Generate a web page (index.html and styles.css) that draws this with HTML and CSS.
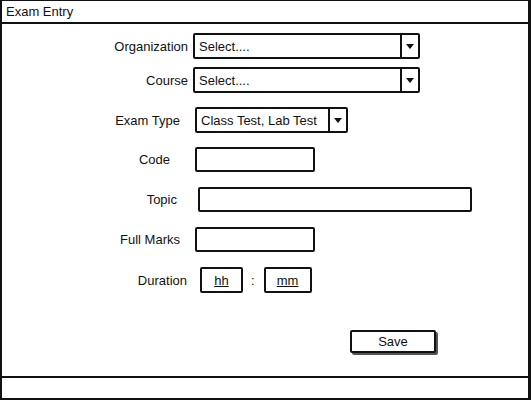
FILE: index.html
```html
<!DOCTYPE html>
<html>
<head>
<meta charset="utf-8">
<link rel="stylesheet" href="styles.css">
</head>
<body>
<div class="window">
  <div class="titlebar">Exam Entry</div>
  <div class="content">
    <div class="row r-org">
      <span class="label">Organization</span>
      <div class="select wide"><span class="sel-text">Select....</span><span class="arrow"></span></div>
    </div>
    <div class="row r-course">
      <span class="label">Course</span>
      <div class="select wide"><span class="sel-text">Select....</span><span class="arrow"></span></div>
    </div>
    <div class="row r-type">
      <span class="label">Exam Type</span>
      <div class="select narrow"><span class="sel-text">Class Test, Lab Test</span><span class="arrow"></span></div>
    </div>
    <div class="row r-code">
      <span class="label">Code</span>
      <div class="input short"></div>
    </div>
    <div class="row r-topic">
      <span class="label">Topic</span>
      <div class="input long"></div>
    </div>
    <div class="row r-marks">
      <span class="label">Full Marks</span>
      <div class="input short"></div>
    </div>
    <div class="row r-dur">
      <span class="label">Duration</span>
      <div class="input time hh"><u>hh</u></div>
      <span class="colon">:</span>
      <div class="input time mm"><u>mm</u></div>
    </div>
    <div class="row r-save">
      <div class="button">Save</div>
    </div>
  </div>
  <div class="statusbar"></div>
</div>
</body>
</html>
```

FILE: styles.css
```css
html, body {
  margin: 0;
  padding: 0;
  background: #fff;
}
body {
  font-family: "Liberation Sans", Arial, sans-serif;
  font-size: 13px;
  color: #111;
}
.window {
  width: 531px;
  height: 400px;
  box-sizing: border-box;
  border: 2px solid #111;
  border-top-width: 1px;
  border-right-width: 3px;
  border-bottom-width: 2px;
  display: flex;
  flex-direction: column;
}
.titlebar {
  height: 21px;
  line-height: 21px;
  padding-left: 4px;
  border-bottom: 2px solid #111;
}
.content {
  flex: 1;
  display: flex;
  flex-direction: column;
}
.statusbar {
  height: 20px;
  border-top: 2px solid #111;
}
.row {
  display: flex;
  align-items: center;
}
.label {
  display: block;
  text-align: right;
  flex: none;
}
.select, .input, .button {
  box-sizing: border-box;
  border: 2px solid #111;
  border-radius: 2px;
  background: #fff;
}
.select {
  display: flex;
  align-items: center;
  height: 26px;
}
.sel-text {
  flex: 1;
  padding-left: 4px;
  white-space: nowrap;
  overflow: hidden;
}
.arrow {
  align-self: stretch;
  width: 16px;
  border-left: 2px solid #111;
  display: flex;
  align-items: center;
  justify-content: center;
}
.arrow::after {
  content: "";
  width: 0;
  height: 0;
  border-left: 4px solid transparent;
  border-right: 4px solid transparent;
  border-top: 5px solid #111;
}
.select.wide { width: 227px; }
.select.narrow { width: 153px; }
.select.narrow .arrow { width: 16px; }
.input { height: 25px; }
.input.short { width: 120px; }
.input.long { width: 274px; }
.input.time {
  display: flex;
  align-items: center;
  justify-content: center;
  height: 26px;
}
.input.hh { width: 43px; }
.input.mm { width: 48px; }
.colon {
  margin-left: 8px;
  margin-right: 9px;
}

/* per-row placement */
.r-org { margin-top: 9px; }
.r-org .label { width: 186px; margin-right: 5px; }
.r-course { margin-top: 8px; }
.r-course .label { width: 186px; margin-right: 5px; }
.r-type { margin-top: 14px; }
.r-type .label { width: 178px; margin-right: 15px; }
.r-code { margin-top: 14px; }
.r-code .label { width: 168px; margin-right: 25px; }
.r-topic { margin-top: 15px; }
.r-topic .label { width: 175px; margin-right: 21px; }
.r-marks { margin-top: 15px; }
.r-marks .label { width: 178px; margin-right: 15px; }
.r-dur { margin-top: 15px; }
.r-dur .label { width: 185px; margin-right: 13px; }
.r-save { margin-top: 37px; }
.button {
  margin-left: 348px;
  width: 86px;
  height: 23px;
  line-height: 19px;
  text-align: center;
  box-shadow: 2px 2px 0 #555;
}
```
